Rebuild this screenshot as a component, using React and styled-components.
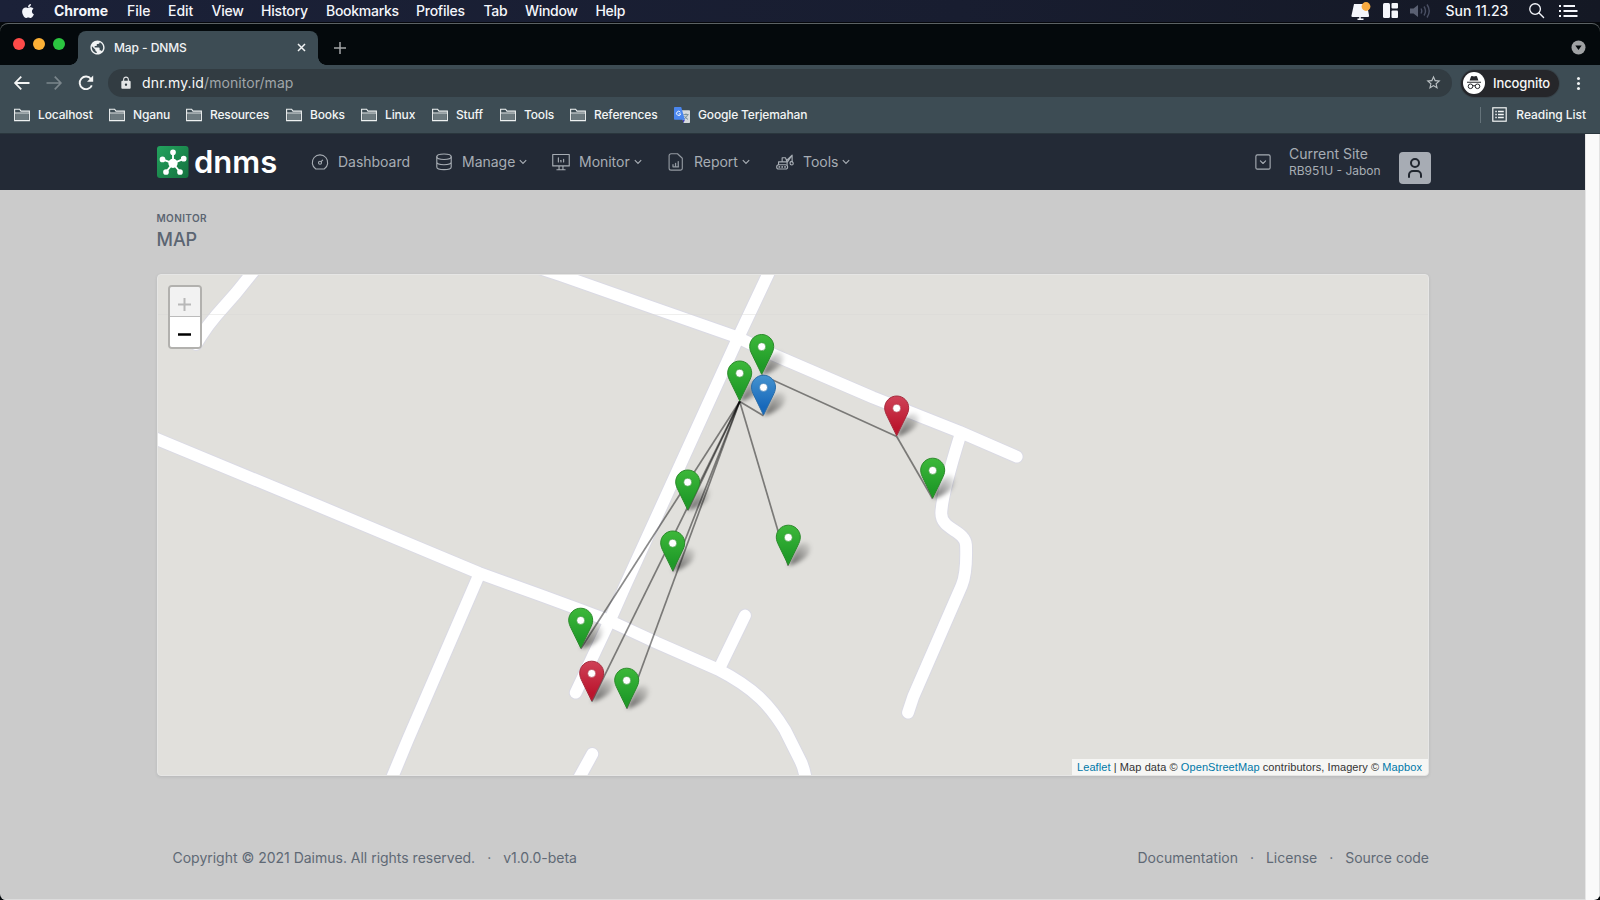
import React from "react";
import styled, { createGlobalStyle, css } from "styled-components";
import { FaApple } from "react-icons/fa";
import { MdPublic, MdLock, MdStarBorder } from "react-icons/md";

const Global = createGlobalStyle`
  * { box-sizing: border-box; }
  body { margin: 0; background: #000; overflow: hidden; }
  svg { display: block; }
`;

const Screen = styled.div`
  width: 1600px;
  height: 900px;
  display: flex;
  flex-direction: column;
  overflow: hidden;
  font-family: Inter, "Liberation Sans", sans-serif;
  background: #04080b;
`;

/* ---------- macOS menu bar ---------- */
const MenuBar = styled.header`
  flex: none;
  height: 23px;
  padding-bottom: 1px;
  display: flex;
  align-items: center;
  background: linear-gradient(90deg, #1b2138, #181d30 60%, #141824);
  border-bottom: 1px solid #05070c;
  color: #f4f6fb;
  font-size: 14px;
  font-weight: 500;
`;
const AppleSlot = styled.div`
  width: 54px;
  padding-left: 19.5px;
`;
const MenuItem = styled.span`
  width: ${(p) => p.$w}px;
  white-space: nowrap;
  font-weight: ${(p) => (p.$bold ? 700 : 500)};
  letter-spacing: ${(p) => p.$ls || 0}px;
`;
const StatusArea = styled.div`
  margin-left: auto;
  display: flex;
  align-items: center;
  padding-right: 22px;
`;
const StatusItem = styled.div`
  width: ${(p) => p.$w}px;
  white-space: nowrap;
`;

/* ---------- browser window ---------- */
const Window = styled.div`
  flex: 1;
  min-height: 0;
  display: flex;
  flex-direction: column;
  border-radius: 8px 8px 6px 6px;
  overflow: hidden;
  background: #04090c;
  box-shadow: inset 0 1px 0 #5c6264;
`;
const TabStrip = styled.div`
  flex: none;
  height: 42px;
  display: flex;
  align-items: flex-end;
  padding-right: 14.5px;
`;
const Lights = styled.div`
  width: 78px;
  height: 42px;
  padding: 0 0 0 13px;
  display: flex;
  align-items: center;
  gap: 8px;
`;
const Light = styled.i`
  width: 12px;
  height: 12px;
  border-radius: 50%;
  background: ${(p) => p.$c};
`;
const Tab = styled.div`
  position: relative;
  width: 240px;
  height: 34px;
  padding: 0 12px 1px 11px;
  display: flex;
  align-items: center;
  border-radius: 8px 8px 0 0;
  background: #3d4c54;
  color: #f1f3f4;
  font-size: 12px;
  &::before, &::after {
    content: "";
    position: absolute;
    bottom: 0;
    width: 8px;
    height: 8px;
  }
  &::before { left: -8px; background: radial-gradient(circle at 0 0, transparent 7.5px, #3d4c54 8px); }
  &::after { right: -8px; background: radial-gradient(circle at 100% 0, transparent 7.5px, #3d4c54 8px); }
`;
const TabTitle = styled.span`
  flex: 1;
  padding-left: 8px;
  font-weight: 500;
  letter-spacing: -0.08px;
`;
const NewTab = styled.div`
  height: 34px;
  padding-left: 16px;
  display: flex;
  align-items: center;
`;
const TabSearch = styled.div`
  margin-left: auto;
  height: 34px;
  padding-bottom: 1px;
  display: flex;
  align-items: center;
`;
const Toolbar = styled.div`
  flex: none;
  height: 36px;
  display: flex;
  align-items: center;
  padding: 0 14px 0 13px;
  background: #3d4c54;
`;
const NavButtons = styled.div`
  width: 95px;
  display: flex;
  gap: 14px;
`;
const Omnibox = styled.div`
  width: 1344px;
  height: 28px;
  display: flex;
  align-items: center;
  padding: 0 10px 1px 11px;
  border-radius: 14px;
  background: #323c42;
`;
const Url = styled.span`
  flex: 1;
  padding-left: 9px;
  font-size: 14px;
  letter-spacing: 0.06px;
  color: #a0a6a9;
  b { font-weight: 400; color: #f7f8f8; letter-spacing: 0.16px; }
`;
const Incognito = styled.div`
  margin-left: 9px;
  width: 98px;
  height: 27px;
  display: flex;
  align-items: center;
  gap: 8px;
  padding-left: 2px;
  border-radius: 14px;
  background: #25262a;
  box-shadow: 0 0 0 1px #38434a;
  color: #f6f6f7;
  font-size: 13px;
  font-weight: 500;
  letter-spacing: -0.1px;
`;
const Kebab = styled.div`
  margin-left: auto;
  width: 9px;
  display: grid;
  gap: 2px;
  i { width: 3px; height: 3px; border-radius: 50%; background: #f1f3f4; }
`;
const BookmarkBar = styled.div`
  flex: none;
  height: 33px;
  display: flex;
  align-items: center;
  padding: 0 14px 5px 14px;
  background: #3d4c54;
  border-bottom: 1px solid #2a363d;
  color: #f3f5f5;
  font-size: 12px;
  font-weight: 500;
  letter-spacing: -0.15px;
`;
const Bookmark = styled.div`
  width: ${(p) => p.$w}px;
  display: flex;
  align-items: center;
  gap: 8px;
  white-space: nowrap;
`;
const ReadingList = styled.div`
  margin-left: auto;
  height: 16px;
  display: flex;
  align-items: center;
  gap: 9px;
  padding-left: 11px;
  border-left: 1px solid #65737a;
  white-space: nowrap;
  letter-spacing: -0.05px;
`;

/* ---------- page ---------- */
const Viewport = styled.div`
  flex: 1;
  min-height: 0;
  display: flex;
`;
const Page = styled.div`
  flex: 1;
  display: flex;
  flex-direction: column;
  background: #cbcbcb;
  border-bottom: 1px solid #dcdcdc;
`;
const Scrollbar = styled.div`
  width: 15px;
  background: #fafafa;
  border-left: 1px solid #e6e6e6;
  border-right: 1px solid #e2e2e2;
`;
const container = css`
  padding-left: 157px;
  padding-right: 156px;
`;
const Navbar = styled.nav`
  ${container}
  flex: none;
  height: 56px;
  display: flex;
  align-items: center;
  padding-right: 154px;
  background: #232a36;
  color: #a7adb4;
`;
const Brand = styled.div`
  width: 154px;
  display: flex;
  align-items: center;
  gap: 5px;
  color: #fff;
  font-size: 31px;
  font-weight: 600;
  line-height: 31px;
`;
const BrandName = styled.span`
  margin-top: -2px;
`;
const NavItem = styled.div`
  width: ${(p) => p.$w}px;
  height: 20px;
  padding-bottom: 1px;
  display: flex;
  align-items: center;
  white-space: nowrap;
  font-size: 14px;
  letter-spacing: -0.02px;
`;
const NavIcon = styled.span`
  width: 27px;
`;
const Caret = styled.svg`
  margin: 1px 0 0 4px;
`;
const Site = styled.div`
  margin-left: auto;
  display: flex;
  align-items: center;
`;
const SiteText = styled.div`
  margin: 0 0 0 17px;
  width: 110px;
  white-space: nowrap;
  font-size: 14px;
  line-height: 16px;
  small {
    display: block;
    font-size: 12px;
    line-height: 17px;
    letter-spacing: 0;
  }
`;
const Avatar = styled.div`
  width: 32px;
  height: 32px;
  margin-top: 12px;
  display: grid;
  place-items: center;
  border-radius: 4px;
  background: #a7acb4;
`;
const Heading = styled.div`
  ${container}
  flex: none;
  height: 84px;
  padding-top: 22px;
  padding-left: 156.5px;
  color: #5b6572;
`;
const Pretitle = styled.div`
  font-size: 10px;
  font-weight: 600;
  line-height: 13px;
  letter-spacing: 0.38px;
`;
const Title = styled.h2`
  margin: 4px 0 0;
  font-size: 18px;
  line-height: 22px;
  font-weight: 500;
  letter-spacing: -0.05px;
`;
const MapCard = styled.div`
  position: relative;
  flex: none;
  margin: 0 156px 0 157px;
  width: 1272px;
  height: 502px;
  border: 1px solid #e6e6e5;
  border-radius: 4px;
  background: #e1e0dc;
  box-shadow: 0 1px 3px rgba(40, 50, 60, 0.12);
  overflow: hidden;
`;
const ZoomControl = styled.div`
  position: absolute;
  left: 10px;
  top: 10px;
  width: 34px;
  border: 2px solid #b2b1ae;
  border-radius: 4px;
  overflow: hidden;
`;
const ZoomButton = styled.div`
  height: 30px;
  padding: ${(p) => (p.$disabled ? "5px 1px 0 0" : "4px 1px 0 0")};
  display: grid;
  place-items: center;
  background: ${(p) => (p.$disabled ? "#f2f2f2" : "#fff")};
  border-bottom: ${(p) => (p.$disabled ? "1px solid #bbb" : "0")};
`;
const Attribution = styled.div`
  position: absolute;
  right: 0;
  bottom: 0;
  height: 16px;
  padding: 0 6px 0 5px;
  background: #f6f6f4;
  color: #333;
  font: 11px/16px "Liberation Sans", Arial, sans-serif;
  letter-spacing: 0.085px;
  white-space: nowrap;
  a { color: #0078a8; }
`;
const Footer = styled.footer`
  ${container}
  margin-top: 72px;
  padding-left: 172.5px;
  display: flex;
  justify-content: space-between;
  font-size: 14px;
  line-height: 20px;
  color: #5f6975;
`;
const FooterGroup = styled.div`
  display: flex;
  letter-spacing: -0.01px;
`;
const Dot = styled.span`
  width: 28px;
  text-align: center;
`;

/* ---------- icons ---------- */
const Line = ({ size = 18, w = 1.5, children, ...r }) => (
  <svg width={size} height={size} viewBox="0 0 24 24" fill="none" stroke="currentColor" strokeWidth={w} strokeLinecap="round" strokeLinejoin="round" {...r}>{children}</svg>
);

const Folder = () => (
  <svg width="16" height="14" viewBox="0 0 16 14">
    <path d="M.6 12.6V1.2h5l1.4 1.9h8.4v9.5z" fill="none" stroke="#eef1f1" strokeWidth="1.1" />
    <path d="M1.4 5.6h13.2V12H1.4z" fill="#6d7a7f" />
    <path d="M.6 5h14.8" stroke="#eef1f1" />
  </svg>
);

const Translate = () => (
  <svg width="16" height="16" viewBox="0 0 16 16">
    <path d="M6 3.2h9.2q.8 0 .8.8v11.2q0 .8-.8.8H9.5z" fill="#d7dadd" />
    <path d="M9.4 7.6h5.2M12 6.4v1.2M13.6 7.6c-.5 2-1.8 3.4-3.6 4.4M10.6 9c.8 1.6 1.8 2.6 3.4 3.4" stroke="#6f8791" strokeWidth=".9" fill="none" />
    <path d="M8.6 12.8h2.3L9.5 16z" fill="#3d3bc0" />
    <path d="M.8 0h6.4l3.7 12.8H.8q-.8 0-.8-.8V.8Q0 0 .8 0z" fill="#4a86ee" />
    <path d="M6.4 5.2A2.1 2.1 0 1 0 6.7 6.9H4.7" stroke="#fff" fill="none" strokeWidth=".9" />
  </svg>
);

const GaugeIcon = () => (
  <Line>
    <circle cx="12" cy="13" r="2" />
    <path d="M13.45 11.55l2.05-2.05M6.4 21.4a10.3 10.3 0 1 1 11.2 0z" />
  </Line>
);
const DatabaseIcon = () => (
  <Line>
    <ellipse cx="12" cy="5" rx="9.6" ry="3.6" />
    <path d="M2.4 5v13.6c0 2 4.3 3.6 9.6 3.6s9.6-1.6 9.6-3.6V5M2.4 12c0 2 4.3 3.6 9.6 3.6s9.6-1.6 9.6-3.6" />
  </Line>
);
const MonitorIcon = () => (
  <Line>
    <path d="M1 2h22v15.2H1zM9.4 17.4v4.4M14.6 17.4v4.4M6.5 22.4h11" />
    <path d="M8.5 6.5V12M12 10.2V12M15.5 8.5V12M11.5 10.2h.6" />
  </Line>
);
const ReportIcon = () => (
  <Line opacity="0.85">
    <path d="M14 1H5.4a2.6 2.6 0 0 0-2.6 2.6v16.6A2.6 2.6 0 0 0 5.4 22.8h12.4a2.6 2.6 0 0 0 2.6-2.6V7z" />
    <path d="M8 18v-2.4M11.4 18v-4.2M15 18v-6.6M8 18.4h7.4" strokeWidth="1.7" />
  </Line>
);
const ToolsIcon = () => (
  <Line>
    <rect x=".9" y="15.6" width="14.6" height="5.8" rx="2.9" />
    <path d="M4.4 18.5h.1M8.2 18.5h.1M12 18.5h.1" strokeWidth="2.4" />
    <path d="M3.4 15.4v-3.6h4.8V6.4h4.4l2.2 5.4v3.6M8.2 11.8h6.4M14.2 10l7.3-7.2V11M14.8 12.4L21.5 3" />
    <path d="M21.5 11.2c-1.8 0-2.8 1-2.8 2.5s1.1 2.3 2.4 2.3 1.9-1.1 1.9-2.5z" />
  </Line>
);

const Down = () => (
  <Caret width="8" height="6" viewBox="0 0 8 6" fill="none" stroke="currentColor" strokeWidth="1.2"><path d="M.8 1.2L4 4.4l3.2-3.2" /></Caret>
);

const Logo = () => (
  <svg width="32" height="32" viewBox="0 0 32 32">
    <defs>
      <linearGradient id="logo" x1="0" y1="0" x2="1" y2="1">
        <stop offset="0" stopColor="#23a35e" /><stop offset="1" stopColor="#14713f" />
      </linearGradient>
    </defs>
    <rect width="31.5" height="32" rx="3" fill="url(#logo)" />
    <g stroke="#fff" strokeWidth="1.9" fill="#fff">
      <path d="M16 17.3V6.4M16 17.3L5.6 13.4M16 17.3l10.6-4.5M16 17.3L9 26M16 17.3L23 26" />
      <circle cx="16" cy="17.3" r="3.7" />
      <circle cx="16" cy="6.3" r="1.9" /><circle cx="5.5" cy="13.4" r="1.9" /><circle cx="26.7" cy="12.7" r="1.9" />
      <circle cx="9" cy="26" r="1.9" /><circle cx="23" cy="26" r="1.9" />
    </g>
  </svg>
);

const Spy = () => (
  <svg width="22" height="22" viewBox="0 0 22 22">
    <circle cx="11" cy="11" r="11" fill="#fff" />
    <path d="M8 4.400q.3-.6 1-.4l2 .5 2-.5q.7-.2 1 .4l1.400 4.100H6.600z" fill="#26272b" />
    <path d="M4 10.300h14" stroke="#26272b" strokeWidth="1.1" />
    <g fill="none" stroke="#26272b" strokeWidth="1"><circle cx="7.500" cy="14.300" r="2.300" /><circle cx="14.500" cy="14.300" r="2.300" /><path d="M9.800 14q1.200-.8 2.400 0" /></g>
  </svg>
);

/* ---------- map ---------- */
const roads = [
  "M262 261L250.500 275 236 293 216.600 315Q208 325 201 336L196 344",
  "M530 265L560 275 656.700 309 736.700 337 773 354.500 873 397.500 960 432 1016.700 456.700",
  "M776 257L767.700 275 738.500 337 625.500 585 610 620 575.700 692.700",
  "M146 434.500L158 439.500 317.500 505.500 479 573 540 595 576.700 608.500 610 621 656.700 642.700 718 669.500C756 689 771 707 785 730L801 762Q804 768 806 780",
  "M479 575L407.700 740 389 785",
  "M745 615.500L719.500 668",
  "M592.300 754L578 780",
  "M960 436Q942 494 941.300 513C941 530 965 530 966 545Q967 573 961.700 585.500L913.300 696.700 908 712.700",
];

const pins = [
  [761.7, 375, "g"], [739.7, 401.5, "g"], [763.5, 415.7, "b"], [896.7, 436.5, "r"], [932.7, 498.7, "g"],
  [687.7, 510.5, "g"], [788.3, 565.7, "g"], [672.7, 571.5, "g"], [580.7, 648.7, "g"], [591.7, 701.7, "r"], [626.7, 708.7, "g"],
];
const links = [2, 6, 5, 7, 8, 9, 10].map((i) => [pins[1], pins[i]]).concat([[pins[0], pins[3]], [pins[3], pins[4]]]);
const tones = { g: ["#3db83a", "#1f9a28", "#2a8a2a"], b: ["#4593cf", "#1768bb", "#2a6da8"], r: ["#cf4257", "#bb162e", "#a52a3c"] };

const MapCanvas = () => (
  <svg width="1270" height="500" viewBox="158 275 1270 500">
    <defs>
      {Object.entries(tones).map(([k, [a, b]]) => (
        <linearGradient key={k} id={`pin-${k}`} x1="0" y1="0" x2="0" y2="1">
          <stop offset="0" stopColor={a} /><stop offset=".8" stopColor={b} />
        </linearGradient>
      ))}
      <linearGradient id="shade" x1="0" y1="1" x2="1" y2="0">
        <stop offset="0" stopColor="#000" stopOpacity=".6" /><stop offset=".5" stopColor="#000" stopOpacity=".32" /><stop offset="1" stopColor="#000" stopOpacity=".02" />
      </linearGradient>
      <filter id="soft" x="-50%" y="-50%" width="200%" height="200%"><feGaussianBlur stdDeviation="2.2" /></filter>
    </defs>
    <g fill="none" strokeLinecap="round" strokeLinejoin="round">
      {roads.map((d) => <path key={d} d={d} stroke="#dadae4" strokeWidth="13.8" />)}
      {roads.map((d) => <path key={d} d={d} stroke="#fff" strokeWidth="11.8" />)}
    </g>
    <path d="M158 314.500H1428" stroke="#d9d8d5" strokeWidth="1" opacity=".4" />
    <g>
      {pins.map(([x, y]) => (
        <path key={`${x}`} transform={`translate(${x} ${y})`} d="M0 0L7-15Q12-25 20-23 25-19 19-10 12-3 0 0z" fill="url(#shade)" filter="url(#soft)" />
      ))}
    </g>
    <g stroke="#000" strokeOpacity=".46" strokeWidth="1.7">
      {links.map(([a, b], i) => <line key={i} x1={a[0]} y1={a[1]} x2={b[0]} y2={b[1]} />)}
    </g>
    {pins.map(([x, y, k]) => (
      <g key={`${x}`} transform={`translate(${x - 12.5} ${y - 41})`}>
        <path d="M12.500.5C5.900.5.5 5.900.5 12.400c0 3.200 1.100 5.600 2.700 8.800L12.500 40.300l9.300-19.100c1.600-3.200 2.700-5.600 2.700-8.800C24.500 5.900 19.100.5 12.500.5z" fill={`url(#pin-${k})`} stroke={tones[k][2]} strokeWidth="1" />
        <circle cx="12.5" cy="12.7" r="4" fill="#fff" stroke={tones[k][2]} strokeOpacity=".7" strokeWidth=".8" />
      </g>
    ))}
  </svg>
);

const menus = [["File", 41, 0], ["Edit", 43.5, 0], ["View", 49.5, -0.2], ["History", 65, -0.2], ["Bookmarks", 90, -0.28], ["Profiles", 67.5, -0.25], ["Tab", 41.5, -0.3], ["Window", 70.5, -0.3], ["Help", 40, -0.3]];
const bookmarks = [["Localhost", 95], ["Nganu", 77], ["Resources", 100], ["Books", 75], ["Linux", 71], ["Stuff", 68], ["Tools", 70], ["References", 104]];
const nav = [
  ["Dashboard", 124, GaugeIcon, false], ["Manage", 117, DatabaseIcon, true], ["Monitor", 115, MonitorIcon, true],
  ["Report", 109, ReportIcon, true], ["Tools", 90, ToolsIcon, true],
];

export default function App() {
  return (
    <Screen>
      <Global />
      <MenuBar>
        <AppleSlot><FaApple size={16} /></AppleSlot>
        <MenuItem $w={73} $bold>Chrome</MenuItem>
        {menus.map(([t, w, ls]) => <MenuItem key={t} $w={w} $ls={ls}>{t}</MenuItem>)}
        <StatusArea>
          <StatusItem $w={32}>
            <svg width="20" height="18" viewBox="0 0 20 18">
              <path d="M3 2h13l2 11.500q.2 1.500-1 1.500H1.500Q.2 15 .5 13.500z" fill="#f4f6fb" />
              <path d="M9 15v2M6.500 17.300h6" stroke="#f4f6fb" strokeWidth="1.5" />
              <circle cx="15" cy="4.5" r="4.4" fill="#f9ab40" />
            </svg>
          </StatusItem>
          <StatusItem $w={27}>
            <svg width="15" height="15" viewBox="0 0 15 15" fill="#f4f6fb">
              <rect width="7" height="15" rx="1.5" /><rect x="8.5" width="6.5" height="5.5" rx="1" /><rect x="8.5" y="7.5" width="6.5" height="7.5" rx="1" />
            </svg>
          </StatusItem>
          <StatusItem $w={35.5}>
            <svg width="21" height="16" viewBox="0 0 21 16" fill="none" stroke="#4a5064" strokeWidth="1.4">
              <path d="M0 5.500h3.500L8 2v12L3.500 10.500H0z" fill="#5a6072" stroke="none" />
              <path d="M11 5.500q1.500 2.500 0 5M14 3.500q3 4.500 0 9M17 1.500q4.500 6.500 0 13" />
            </svg>
          </StatusItem>
          <StatusItem $w={82.5}>Sun 11.23</StatusItem>
          <StatusItem $w={31}>
            <Line size={17} w={1.9}><circle cx="10" cy="10" r="7.5" /><path d="M15.600 15.600L22 22" /></Line>
          </StatusItem>
          <StatusItem $w={19}>
            <svg width="19" height="12" viewBox="0 0 19 12" stroke="#f4f6fb" strokeWidth="2"><path d="M0 1h2M4.500 1H16M0 6h2M4.500 6H18.500M0 11h2M4.500 11H18.500" /></svg>
          </StatusItem>
        </StatusArea>
      </MenuBar>

      <Window>
        <TabStrip>
          <Lights><Light $c="#fe4b49" /><Light $c="#fdb136" /><Light $c="#2bc640" /></Lights>
          <Tab>
            <MdPublic size={17} />
            <TabTitle>Map - DNMS</TabTitle>
            <svg width="9" height="9" viewBox="0 0 9 9" stroke="#f1f3f4" strokeWidth="1.5"><path d="M1 1l7 7M8 1L1 8" /></svg>
          </Tab>
          <NewTab><svg width="12" height="12" viewBox="0 0 12 12" stroke="#a3a5a7" strokeWidth="1.5"><path d="M6 0v12M0 6h12" /></svg></NewTab>
          <TabSearch>
            <svg width="15" height="15" viewBox="0 0 15 15"><circle cx="7.5" cy="7.5" r="7" fill="#a0a2a4" /><path d="M4.300 5.500h6.400L7.500 10z" fill="#04090c" /></svg>
          </TabSearch>
        </TabStrip>
        <Toolbar>
          <NavButtons>
            <Line w={2.4}><path d="M22 12H3M11 3.500L2.800 12l8.200 8.500" stroke="#f4f5f5" strokeLinecap="butt" strokeLinejoin="miter" /></Line>
            <Line w={2.2}><path d="M2 12h19M13 3.500l8.200 8.500-8.200 8.500" stroke="#7b868c" strokeLinecap="butt" strokeLinejoin="miter" /></Line>
            <svg width="18" height="18" viewBox="0 0 18 18"><path d="M14.800 11.300A6.300 6.300 0 1 1 14 5" fill="none" stroke="#f4f5f5" strokeWidth="1.9" /><path d="M16.200 1.600v6.200H10z" fill="#f4f5f5" /></svg>
          </NavButtons>
          <Omnibox>
            <MdLock size={14} color="#e3e5e6" />
            <Url><b>dnr.my.id</b>/monitor/map</Url>
            <MdStarBorder size={17} color="#b9bfc2" />
          </Omnibox>
          <Incognito><Spy />Incognito</Incognito>
          <Kebab><i /><i /><i /></Kebab>
        </Toolbar>
        <BookmarkBar>
          {bookmarks.map(([t, w]) => <Bookmark key={t} $w={w}><Folder />{t}</Bookmark>)}
          <Bookmark $w={140}><Translate />Google Terjemahan</Bookmark>
          <ReadingList>
            <svg width="15" height="15" viewBox="0 0 15 15" fill="none" stroke="#f3f5f5" strokeWidth="1.2"><rect x=".8" y=".8" width="13.4" height="13.4" /><path d="M3.300 4.500h1.500M6 4.500h5.800M3.300 7.500h1.500M6 7.500h5.800M3.300 10.500h1.500M6 10.500h5.800" strokeWidth="1.5" /></svg>
            Reading List
          </ReadingList>
        </BookmarkBar>

        <Viewport>
          <Page>
            <Navbar>
              <Brand><Logo /><BrandName>dnms</BrandName></Brand>
              {nav.map(([t, w, Icon, caret]) => (
                <NavItem key={t} $w={w}><NavIcon><Icon /></NavIcon>{t}{caret && <Down />}</NavItem>
              ))}
              <Site>
                <Line size={18}><rect x="2.5" y="2.5" width="19" height="19" rx="2" /><path d="M8.500 10.500l3.500 3.500 3.500-3.500" /></Line>
                <SiteText>Current Site<small>RB951U - Jabon</small></SiteText>
                <Avatar>
                  <Line size={24} w={2} stroke="#20262f"><circle cx="12" cy="7" r="4" /><path d="M6 21v-2a4 4 0 0 1 4-4h4a4 4 0 0 1 4 4v2" /></Line>
                </Avatar>
              </Site>
            </Navbar>
            <Heading>
              <Pretitle>MONITOR</Pretitle>
              <Title>MAP</Title>
            </Heading>
            <MapCard>
              <MapCanvas />
              <ZoomControl>
                <ZoomButton $disabled><svg width="13" height="13" viewBox="0 0 13 13" stroke="#b8b8b8" strokeWidth="2"><path d="M6.500 0v13M0 6.500h13" /></svg></ZoomButton>
                <ZoomButton><svg width="13" height="13" viewBox="0 0 13 13" stroke="#000" strokeWidth="2.5"><path d="M0 6.500h13" /></svg></ZoomButton>
              </ZoomControl>
              <Attribution><a>Leaflet</a> | Map data © <a>OpenStreetMap</a> contributors, Imagery © <a>Mapbox</a></Attribution>
            </MapCard>
            <Footer>
              <FooterGroup><span>Copyright © 2021 Daimus. All rights reserved.</span><Dot>·</Dot><span>v1.0.0-beta</span></FooterGroup>
              <FooterGroup><span>Documentation</span><Dot>·</Dot><span>License</span><Dot>·</Dot><span>Source code</span></FooterGroup>
            </Footer>
          </Page>
          <Scrollbar />
        </Viewport>
      </Window>
    </Screen>
  );
}
